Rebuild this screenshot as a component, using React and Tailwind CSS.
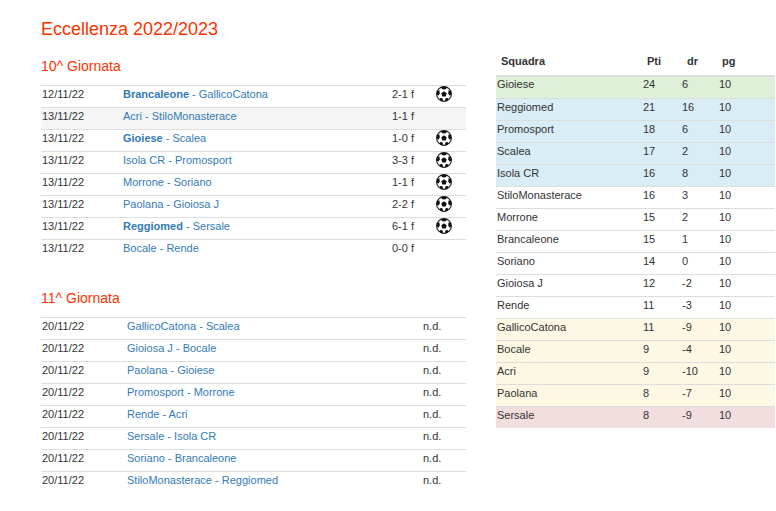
const round10 = [
  { date: "12/11/22", home: "Brancaleone", away: "GallicoCatona", bold: true, res: "2-1 f", ball: true },
  { date: "13/11/22", home: "Acri", away: "StiloMonasterace", res: "1-1 f", shaded: true },
  { date: "13/11/22", home: "Gioiese", away: "Scalea", bold: true, res: "1-0 f", ball: true },
  { date: "13/11/22", home: "Isola CR", away: "Promosport", res: "3-3 f", ball: true },
  { date: "13/11/22", home: "Morrone", away: "Soriano", res: "1-1 f", ball: true },
  { date: "13/11/22", home: "Paolana", away: "Gioiosa J", res: "2-2 f", ball: true },
  { date: "13/11/22", home: "Reggiomed", away: "Sersale", bold: true, res: "6-1 f", ball: true },
  { date: "13/11/22", home: "Bocale", away: "Rende", res: "0-0 f" },
];

const round11 = [
  ["GallicoCatona", "Scalea"],
  ["Gioiosa J", "Bocale"],
  ["Paolana", "Gioiese"],
  ["Promosport", "Morrone"],
  ["Rende", "Acri"],
  ["Sersale", "Isola CR"],
  ["Soriano", "Brancaleone"],
  ["StiloMonasterace", "Reggiomed"],
];

const standings = [
  ["Gioiese", 24, 6, "bg-[#dff0d8]"],
  ["Reggiomed", 21, 16, "bg-[#d9edf7]"],
  ["Promosport", 18, 6, "bg-[#d9edf7]"],
  ["Scalea", 17, 2, "bg-[#d9edf7]"],
  ["Isola CR", 16, 8, "bg-[#d9edf7]"],
  ["StiloMonasterace", 16, 3, ""],
  ["Morrone", 15, 2, ""],
  ["Brancaleone", 15, 1, ""],
  ["Soriano", 14, 0, ""],
  ["Gioiosa J", 12, -2, ""],
  ["Rende", 11, -3, ""],
  ["GallicoCatona", 11, -9, "bg-[#fcf8e3]"],
  ["Bocale", 9, -4, "bg-[#fcf8e3]"],
  ["Acri", 9, -10, "bg-[#fcf8e3]"],
  ["Paolana", 8, -7, "bg-[#fcf8e3]"],
  ["Sersale", 8, -9, "bg-[#f2dede]"],
];

function Ball() {
  return (
    <svg width="16" height="16" viewBox="0 0 16 16" className="block">
      <circle cx="8" cy="8" r="7.4" fill="#fff" stroke="#1c1c1c" strokeWidth="1.1" />
      <polygon points="8,5.3 10.7,7.3 9.7,10.4 6.3,10.4 5.3,7.3" fill="#111" />
      <path d="M5.2 1 L10.8 1 L10.2 2.9 L8 3.6 L5.8 2.9 Z" fill="#111" />
      <path d="M0.8 5.2 L3.4 4.3 L3.8 7.2 L2.6 9.4 L0.6 8.8 Z" fill="#111" />
      <path d="M15.2 5.2 L12.6 4.3 L12.2 7.2 L13.4 9.4 L15.4 8.8 Z" fill="#111" />
      <path d="M3.2 13.2 L5 11.8 L6.8 12.8 L6.8 15.4 L4.8 14.8 Z" fill="#111" />
      <path d="M12.8 13.2 L11 11.8 L9.2 12.8 L9.2 15.4 L11.2 14.8 Z" fill="#111" />
    </svg>
  );
}

function Match({ home, away, bold }) {
  return (
    <span className="text-[#337ab7]">
      <span className={bold ? "font-bold" : ""}>{home}</span> - {away}
    </span>
  );
}

export default function App() {
  return (
    <div className="w-[776px] h-[511px] overflow-hidden bg-white flex text-[11px] leading-[16px] text-[#333] font-['Liberation_Sans',Arial,sans-serif]">
      <div className="w-[425px] ml-[41px] pt-[19px] shrink-0">
        <h1 className="text-[18px] leading-[20px] text-[#ff3300] mb-[19px]">Eccellenza 2022/2023</h1>

        <h2 className="text-[14px] leading-[16px] text-[#ff3300] mb-[11px]">10^ Giornata</h2>
        <div>
          {round10.map((m, i) => (
            <div
              key={i}
              className={`flex items-start h-[22px] border-t border-[#ddd] ${m.shaded ? "bg-[#f5f5f5]" : ""}`}
            >
              <span className="w-[82px] pl-px">{m.date}</span>
              <span className="w-[269px]">
                <Match home={m.home} away={m.away} bold={m.bold} />
              </span>
              <span className="w-[44px]">{m.res}</span>
              {m.ball && <Ball />}
            </div>
          ))}
        </div>

        <h2 className="text-[14px] leading-[16px] text-[#ff3300] mt-[29px] mb-[11px]">11^ Giornata</h2>
        <div>
          {round11.map(([home, away], i) => (
            <div key={i} className="flex items-start h-[22px] border-t border-[#ddd]">
              <span className="w-[86px] pl-px">20/11/22</span>
              <span className="w-[296px]">
                <Match home={home} away={away} />
              </span>
              <span>n.d.</span>
            </div>
          ))}
        </div>
      </div>

      <div className="w-[279px] ml-[30px] pt-[49px] shrink-0">
        <div className="flex items-start h-[28px] pt-[4px] font-bold border-b-2 border-[#ddd]">
          <span className="w-[151px] pl-[5px]">Squadra</span>
          <span className="w-[40px]">Pti</span>
          <span className="w-[35px]">dr</span>
          <span>pg</span>
        </div>
        {standings.map(([team, pts, dr, bg], i) => (
          <div
            key={team}
            className={`flex ${i > 0 ? "h-[22px] border-t border-[#ddd]" : "h-[21px] leading-[14px]"} ${bg}`}
          >
            <span className="w-[147px] pl-px">{team}</span>
            <span className="w-[39px]">{pts}</span>
            <span className="w-[37px]">{dr}</span>
            <span>10</span>
          </div>
        ))}
      </div>
    </div>
  );
}
